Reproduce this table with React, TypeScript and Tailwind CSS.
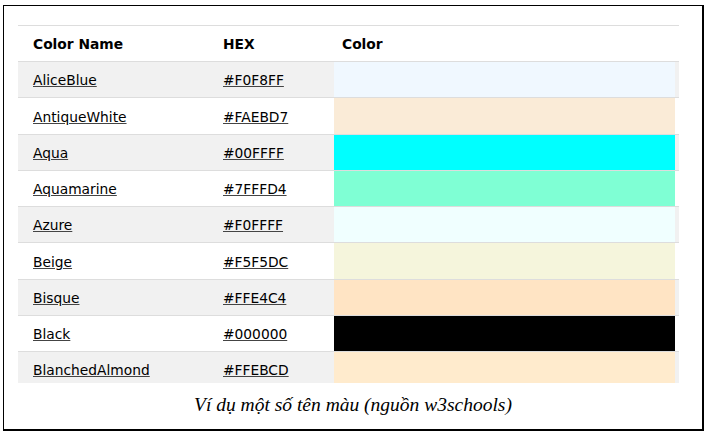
const colors = [
  { name: "AliceBlue", hex: "#F0F8FF", swatch: "bg-[#F0F8FF]" },
  { name: "AntiqueWhite", hex: "#FAEBD7", swatch: "bg-[#FAEBD7]" },
  { name: "Aqua", hex: "#00FFFF", swatch: "bg-[#00FFFF]" },
  { name: "Aquamarine", hex: "#7FFFD4", swatch: "bg-[#7FFFD4]" },
  { name: "Azure", hex: "#F0FFFF", swatch: "bg-[#F0FFFF]" },
  { name: "Beige", hex: "#F5F5DC", swatch: "bg-[#F5F5DC]" },
  { name: "Bisque", hex: "#FFE4C4", swatch: "bg-[#FFE4C4]" },
  { name: "Black", hex: "#000000", swatch: "bg-[#000000]" },
  { name: "BlanchedAlmond", hex: "#FFEBCD", swatch: "bg-[#FFEBCD]" },
];

export default function App() {
  return (
    <div className="w-[709px] h-[434px] bg-white pt-[5px] pl-[3px]">
      <div className="w-[701px] h-[426px] border-l border-t border-r-2 border-b-2 border-black pt-[19px] pl-[14px]">
        <div className="w-[661px] h-[358px] overflow-hidden font-['DejaVu_Sans',sans-serif] text-[13.8px] text-black">
          <div className="flex h-[36px] items-center pt-[2px] border-t border-[#ddd] bg-white font-bold">
            <div className="w-[197px] pl-[15px]">Color Name</div>
            <div className="w-[119px] pl-[8px]">HEX</div>
            <div className="flex-1 pl-[8px]">Color</div>
          </div>
          {colors.map((c, i) => (
            <div
              key={c.name}
              className={`flex h-[36.25px] border-t border-[#ddd] ${i % 2 === 0 ? "bg-[#f1f1f1]" : "bg-white"}`}
            >
              <div className="w-[197px] pl-[15px] pt-[2px] flex items-center">
                <span className="underline decoration-[#444]">{c.name}</span>
              </div>
              <div className="w-[119px] pl-[8px] pt-[2px] flex items-center">
                <span className="underline decoration-[#444]">{c.hex}</span>
              </div>
              <div className="flex-1 pr-[4px]">
                <div className={`h-full w-full ${c.swatch}`} />
              </div>
            </div>
          ))}
        </div>
        <p className="mt-[11px] pr-[14px] text-center font-['Liberation_Serif',serif] italic text-[19.5px] leading-[22px] text-black">
          Ví dụ một số tên màu (nguồn w3schools)
        </p>
      </div>
    </div>
  );
}
